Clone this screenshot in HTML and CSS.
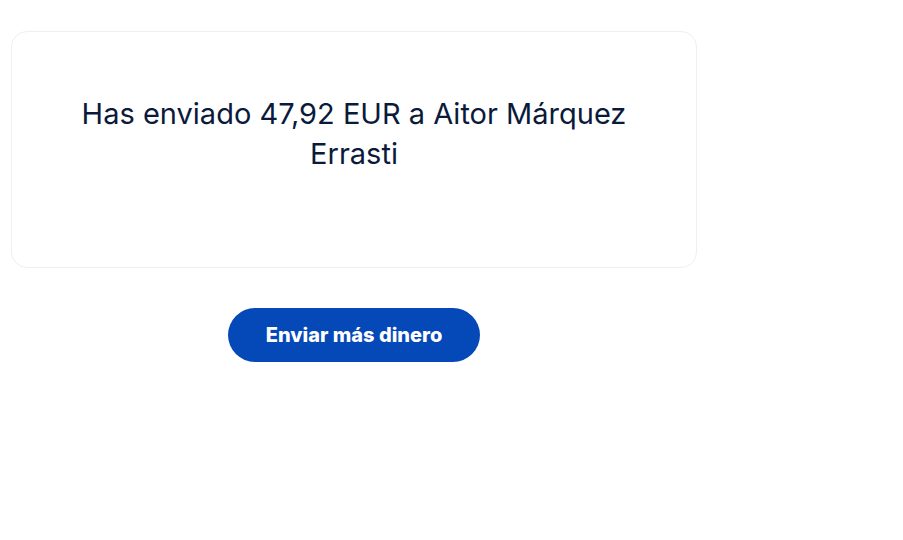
FILE: index.html
```html
<!DOCTYPE html>
<html lang="es">
<head>
  <meta charset="UTF-8">
  <meta name="viewport" content="width=device-width, initial-scale=1.0">
  <title>Envío completado</title>
  <link rel="stylesheet" href="styles.css">
</head>
<body>
  <div class="confirmation">
    <!-- Summary card -->
    <div class="summary-card">
      <h1 class="summary-text">Has enviado 47,92 EUR a Aitor Márquez Errasti</h1>
    </div>

    <!-- Action -->
    <div class="actions">
      <button class="btn-primary" type="button">Enviar más dinero</button>
    </div>
  </div>
</body>
</html>
```

FILE: styles.css
```css
/* Page */
body {
  margin: 0;
  background: #ffffff;
  font-family: Inter, "Noto Sans", Arial, sans-serif;
}

.confirmation {
  width: 686px;
  margin-left: 11px;
  padding-top: 31px;
}

/* Summary card */
.summary-card {
  border: 1px solid #eeeff2;
  border-radius: 16px;
  padding: 62px 56px 93px;
  text-align: center;
}

.summary-text {
  margin: 0;
  font-size: 29px;
  font-weight: 400;
  line-height: 40px;
  color: #0b1a3a;
}

/* Actions */
.actions {
  display: flex;
  justify-content: center;
  margin-top: 40px;
}

.btn-primary {
  height: 54px;
  padding: 0 38px;
  border: none;
  border-radius: 27px;
  background-color: #0548b8;
  color: #ffffff;
  font-family: Inter, "Noto Sans", Arial, sans-serif;
  font-size: 20px;
  font-weight: 800;
  cursor: pointer;
}
```
